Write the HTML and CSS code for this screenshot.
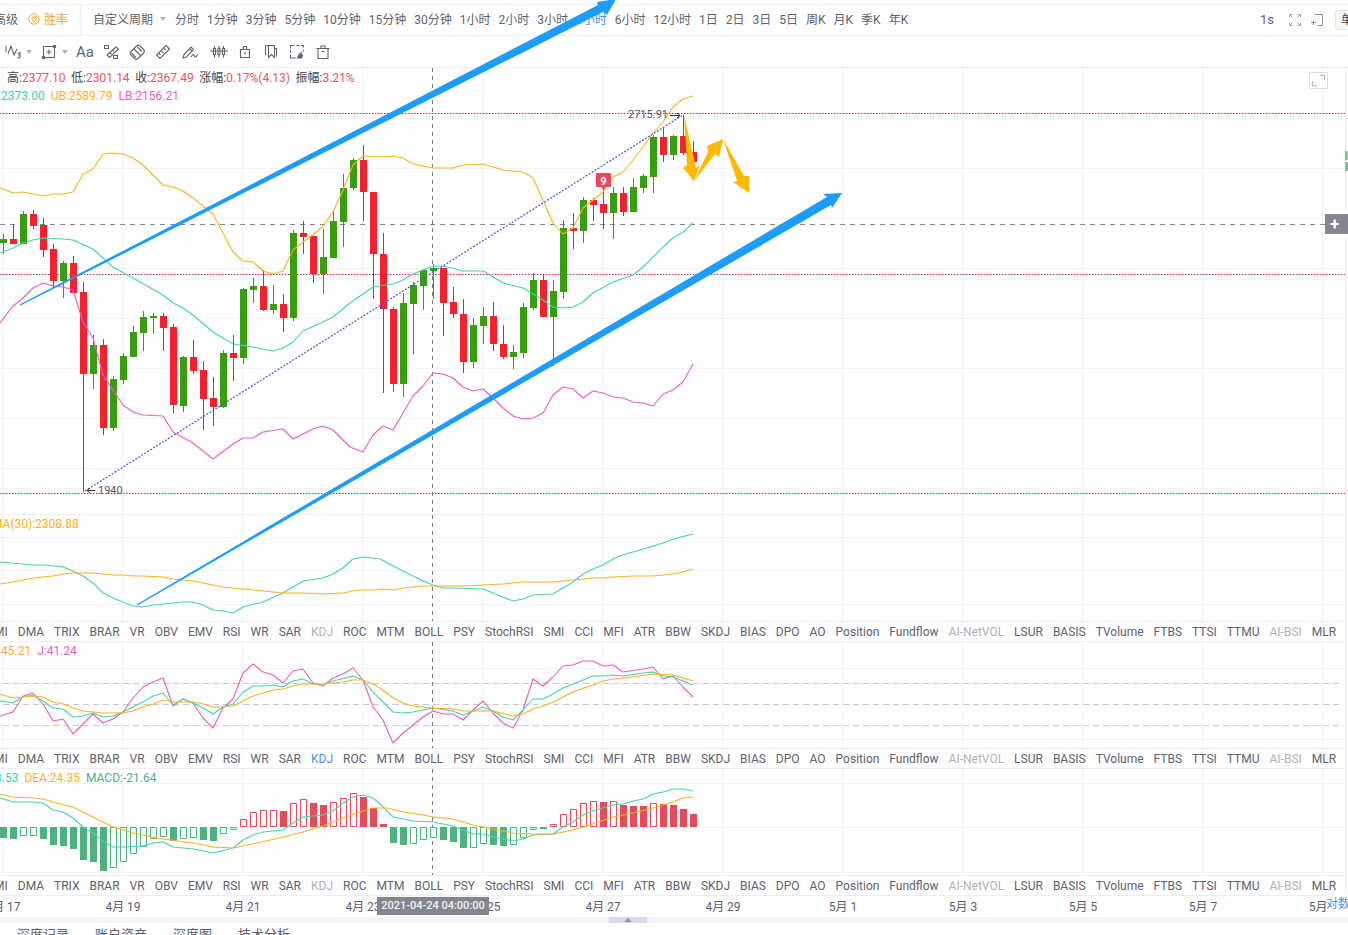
FILE: index.html
```html
<!DOCTYPE html>
<html lang="zh-CN">
<head>
<meta charset="utf-8">
<title>K线图</title>
<link rel="stylesheet" href="styles.css">
</head>
<body>
<div class="app">
  <div class="toprule"></div>

  <div class="periodbar">
    <div class="period-left">
      <span>高级</span>
      <span class="winrate">
        <svg class="ic12" viewBox="0 0 12 12"><circle cx="6" cy="6" r="5.2" fill="none" stroke="#f7a823" stroke-width="1"/><circle cx="6" cy="6" r="2.2" fill="none" stroke="#f7a823" stroke-width="1"/><path d="M6 6l3-3" stroke="#f7a823" fill="none"/></svg>
        胜率
      </span>
    </div>
    <div class="periods">
      <span class="custom">自定义周期<i class="caret"></i></span>
      <span>分时</span><span>1分钟</span><span>3分钟</span><span>5分钟</span><span>10分钟</span><span>15分钟</span><span>30分钟</span>
      <span>1小时</span><span>2小时</span><span>3小时</span><span class="active">4小时</span><span>6小时</span><span>12小时</span>
      <span>1日</span><span>2日</span><span>3日</span><span>5日</span><span>周K</span><span>月K</span><span>季K</span><span>年K</span>
    </div>
    <div class="period-right">
      <span class="secs">1s</span>
      <svg class="ic12" viewBox="0 0 12 12" fill="none" stroke="#a5a9b4"><path d="M0.5 3.5v-3h3M0.5 0.5l3 3M8.5 0.5h3v3M11.5 0.5l-3 3M0.5 8.5v3h3M0.5 11.5l3-3M8.5 11.5h3v-3M11.5 11.5l-3-3"/></svg>
      <svg class="ic12" viewBox="0 0 12 12" fill="none" stroke="#8d919c"><path d="M3.5 0.5h8v11h-5M0 8.5h5M2.5 6v5"/></svg>
      <span class="single">单</span>
    </div>
  </div>

  <div class="drawbar">
    <div class="tool group1">
      <svg class="ic-wide" viewBox="0 0 18 14" fill="none" stroke="#5f6470" stroke-width="1.1"><path d="M2 1v6M4 9l3-8 3 9 3-6"/><path d="M13.5 8h3l-1.5 2c2 0 2 3-1.500 3"/></svg>
      <i class="caret"></i>
    </div>
    <div class="tool group2">
      <svg class="ic-wide" viewBox="0 0 16 14" fill="none" stroke="#5f6470" stroke-width="1.1"><path d="M2.5 1.5h11v11h-11zM8 4.500v5M5.500 7h5"/><circle cx="2.500" cy="12.500" r="1.200" fill="#5f6470"/><circle cx="13.500" cy="1.500" r="1.200" fill="#5f6470"/></svg>
      <i class="caret"></i>
    </div>
    <div class="tool aa">Aa</div>
    <div class="tool"><svg class="ic16" viewBox="0 0 16 16" fill="none" stroke="#5f6470" stroke-width="1.1"><path d="M1.500 1.500h4v3h-4zM10.500 11.500h4v3h-4zM13 3l-9 8 2.500 2.500 9-8.500z"/><path d="M9.500 6l1.500 1.500M7 8.500l1.500 1.500"/></svg></div>
    <div class="tool"><svg class="ic16" viewBox="0 0 16 16" fill="none" stroke="#5f6470" stroke-width="1.1"><path d="M5.500 14.500l-3.500-3.500c-1-1-1-2.500 0-3.500l5.500-5.500c1-1 2.500-1 3.500 0l3.500 3.500c1 1 1 2.500 0 3.500l-5.500 5.500c-1 1-2.500 1-3.500 0z"/><path d="M5 5l6.500 6.500M2.500 9l4.500 4.500M8.500 3l4.500 4.500"/></svg></div>
    <div class="tool"><svg class="ic16" viewBox="0 0 16 16" fill="none" stroke="#5f6470" stroke-width="1.1"><path d="M11 1.500l3.500 3.500-9.500 9.500-3.500-3.500z"/><path d="M4 9.500l1.500 1.500M6.500 7l2 2M9 4.500l1.500 1.500"/></svg></div>
    <div class="tool wide"><svg class="ic-draw" viewBox="0 0 18 14" fill="none" stroke="#5f6470" stroke-width="1.1"><path d="M1 13l1-3.500 7-7.500 2.500 2.500-7 7.500zM7.500 3.500l2.500 2.500"/><path d="M9 12c1.500-3 3-3 3.500-1s2 1 3-1.500"/></svg></div>
    <div class="tool"><svg class="ic-wide" viewBox="0 0 18 14" fill="none" stroke="#5f6470" stroke-width="1.1"><path d="M3.500 3.500h2v6h-2zM8 3.500h2v6h-2zM12.500 3.500h2v6h-2zM4.500 1v2.500M4.500 9.500v3M9 1v2.500M9 9.500v3M13.500 1v2.500M13.500 9.500v3M0 6h18"/></svg></div>
    <div class="tool"><svg class="ic12" viewBox="0 0 12 12" fill="none" stroke="#5f6470" stroke-width="1.1"><path d="M1.500 3.500h9v8h-9zM4.500 3.500v-3h3v3"/><path d="M6 6v2.500"/></svg></div>
    <div class="tool"><svg class="ic14" viewBox="0 0 14 14" fill="none" stroke="#5f6470" stroke-width="1.1"><path d="M1.500 0.500h9v12l-3-3-3 3v-12"/><path d="M1.500 0.500v9.500M10.500 3.500h2v8"/></svg></div>
    <div class="tool"><svg class="ic16" viewBox="0 0 16 16" fill="none" stroke="#5f6470" stroke-width="1.1"><path d="M1.500 4.500v-3h4M7.500 1.500h3M12 1.500h2.500v2M1.500 6v3M1.500 10.500v3.500h5M14.500 5.500v2"/><path d="M8.500 14l2-4 3 1-1 3z" fill="#5f6470"/><path d="M11 10l2-2"/></svg></div>
    <div class="tool"><svg class="ic14" viewBox="0 0 14 14" fill="none" stroke="#5f6470" stroke-width="1.1"><path d="M0.500 3.500h13M5 3.500v-2.500h4v2.500M2 3.500v10h10v-10M5.500 6.500h3"/></svg></div>
  </div>

  <div class="charts">
    <section class="pane pane-main">
      <svg class="plot" viewBox="0 68 1345 446">
        <path class="grid" d="M2.500 68v446M122.500 68v446M242.500 68v446M362.500 68v446M482.500 68v446M602.500 68v446M722.500 68v446M842.500 68v446M962.500 68v446M1082.500 68v446M1202.500 68v446M1322.500 68v446M0 118.500h1345M0 168.500h1345M0 218.500h1345M0 268.500h1345M0 318.500h1345M0 368.500h1345M0 418.500h1345M0 468.500h1345"/>
        <path class="level" d="M0 113.500h1345M0 274.500h1345M0 493.500h1345"/>
        <path class="current" d="M0 224.500h1325"/>
        <path class="cross" d="M432.500 68v446"/>
        <path class="wick-g" d="M3.500 234V254M23.500 211V244M63.500 261V298M93.500 335V389M113.500 376V431M123.500 353V384M133.500 326V357M143.500 311V351M153.500 313V334M183.500 356V412M223.500 350V408M243.500 288V364M253.500 278V303M273.500 285V314M293.500 230V321M323.500 229V294M333.500 210V258M343.500 174V247M353.500 158V190M403.500 293V397M413.500 282V354M423.500 269V310M433.500 264V299M473.500 318V368M483.500 307V344M513.500 345V369M523.500 303V358M533.500 273V310M553.500 280V366M563.500 220V299M583.500 197V243M613.500 187V239M633.500 178V212M643.500 174V193M653.500 135V193M673.500 135V160"/>
        <path class="wick-r" d="M13.500 224V244M33.500 210V229M43.500 218V257M53.500 244V287M73.500 256V293M83.500 282V492M103.500 339V435M163.500 313V351M173.500 324V413M193.500 340V374M203.500 361V430M213.500 377V426M233.500 335V381M263.500 270V311M283.500 294V332M303.500 221V254M313.500 236V283M363.500 145V221M373.500 192V299M383.500 233V393M393.500 307V392M443.500 268V336M453.500 287V318M463.500 299V373M493.500 302V351M503.500 325V359M543.500 274V317M573.500 213V249M593.500 198V221M603.500 187V229M623.500 187V216M663.500 128V162M683.500 115V155M693.500 141V167"/>
        <path class="body-g" d="M0 239h7v4h-7zM20 214h7v30h-7zM60 263h7v18h-7zM90 345h7v29h-7zM110 379h7v49h-7zM120 356h7v24h-7zM130 332h7v25h-7zM140 317h7v16h-7zM150 316h7v2h-7zM180 357h7v49h-7zM220 353h7v54h-7zM240 289h7v69h-7zM250 286h7v4h-7zM270 304h7v6h-7zM290 233h7v85h-7zM320 257h7v17h-7zM330 221h7v37h-7zM340 188h7v34h-7zM350 160h7v28h-7zM400 303h7v81h-7zM410 285h7v19h-7zM420 270h7v16h-7zM430 268h7v3h-7zM470 325h7v37h-7zM480 316h7v10h-7zM510 352h7v5h-7zM520 307h7v46h-7zM530 280h7v28h-7zM550 291h7v26h-7zM560 228h7v64h-7zM580 200h7v31h-7zM610 193h7v20h-7zM630 187h7v25h-7zM640 176h7v12h-7zM650 137h7v40h-7zM670 136h7v19h-7z"/>
        <path class="body-r" d="M10 239h7v5h-7zM30 214h7v12h-7zM40 225h7v25h-7zM50 249h7v32h-7zM70 263h7v30h-7zM80 292h7v82h-7zM100 345h7v83h-7zM160 316h7v12h-7zM170 327h7v78h-7zM190 357h7v14h-7zM200 370h7v29h-7zM210 398h7v9h-7zM230 353h7v5h-7zM260 286h7v24h-7zM280 304h7v14h-7zM300 233h7v4h-7zM310 236h7v38h-7zM360 160h7v32h-7zM370 192h7v62h-7zM380 254h7v55h-7zM390 309h7v75h-7zM440 268h7v35h-7zM450 302h7v12h-7zM460 314h7v48h-7zM490 316h7v28h-7zM500 344h7v13h-7zM540 280h7v37h-7zM570 228h7v3h-7zM590 200h7v5h-7zM600 204h7v9h-7zM620 193h7v19h-7zM660 137h7v18h-7zM680 136h7v17h-7zM690 152h7v10h-7z"/>
        <polyline class="ln-o" points="0,188 13,193 23,192 33,194 43,196 53,194 63,194 73,192 83,174 93,169 103,154 113,153 123,154 133,158 143,165 153,175 163,185 173,187 183,191 193,198 203,206 213,214 223,233 233,252 243,261 253,262 263,271 273,274 283,271 293,250 303,242 313,235 323,226 333,212 343,190 353,165 363,156 383,157 393,156 403,158 413,164 433,168 453,168 463,165 483,164 503,170 523,172 533,178 543,200 553,223 563,234 573,228 583,208 593,200 603,192 613,177 623,172 633,160 643,147 653,133 663,122 673,107 683,99 693,96"/>
        <polyline class="ln-t" points="0,253 13,248 23,243 33,240 43,238 63,239 73,240 93,249 113,267 133,278 163,295 173,303 183,308 193,315 213,332 233,344 253,347 273,351 283,348 293,342 303,331 323,322 333,317 350,303 373,287 393,284 403,280 413,274 423,270 433,266 443,266 463,271 483,271 503,283 523,288 543,300 553,307 563,308 573,307 583,302 593,293 613,282 633,275 643,267 653,257 663,247 673,238 683,232 693,223"/>
        <polyline class="ln-p" points="0,323 13,306 23,298 33,288 43,283 53,286 63,287 73,290 83,322 93,338 103,375 113,390 123,405 133,412 143,415 163,416 173,432 193,443 213,459 233,444 243,438 253,438 263,432 283,429 293,439 303,434 313,429 323,426 333,430 350,447 363,452 373,435 383,426 393,430 403,413 413,396 423,386 433,373 443,374 453,378 463,387 473,391 483,389 493,398 503,408 513,416 523,419 533,418 543,413 553,395 563,387 573,389 583,398 593,391 603,393 613,397 623,398 633,402 643,403 653,406 663,394 673,390 683,382 693,364"/>
        <path class="trend" d="M85 491L683 115"/>
        <path class="tick" d="M670 115.500h10M677 113l3 2.500-3 2.500M87 490.500h8M90 488l-3 2.500 3 2.500"/>
        <text class="price" x="628" y="118">2715.91</text>
        <text class="price" x="98" y="494">1940</text>
        <path class="badge" d="M598 173h12a1 1 0 0 1 1 1v12a1 1 0 0 1-1 1h-4l-2.500 3-2.500-3h-4a1 1 0 0 1-1-1v-12a1 1 0 0 1 1-1z"/>
        <text class="badge-t" x="603.500" y="185">9</text>
      </svg>
      <div class="legend legend-main">
        <div class="legend-row first">
          <span>高:<b class="up">2377.10</b></span><span>低:<b class="up">2301.14</b></span><span>收:<b class="up">2367.49</b></span><span>涨幅:<b class="up">0.17%(4.13)</b></span><span>振幅:<b class="up">3.21%</b></span>
        </div>
        <div class="legend-row second">
          <span class="c-t">2373.00</span><span class="c-o">UB:2589.79</span><span class="c-p">LB:2156.21</span>
        </div>
      </div>
      <div class="expand"><svg viewBox="0 0 19 17" fill="none" stroke="#9ca2ad"><path d="M11 2.500h5.500v5M2.500 9.500v5h5"/></svg></div>
      <div class="plus-tag">+</div>
      <div class="axis-mark m1"></div>
      <div class="axis-mark m2"></div>
    </section>

    <section class="pane pane-sub">
      <svg class="plot" viewBox="0 515 1345 106">
        <path class="grid" d="M2.500 515v106M122.500 515v106M242.500 515v106M362.500 515v106M482.500 515v106M602.500 515v106M722.500 515v106M842.500 515v106M962.500 515v106M1082.500 515v106M1202.500 515v106M1322.500 515v106M0 537.500h1345M0 570.500h1345M0 604.500h1345"/>
        <path class="cross" d="M432.500 515v106"/>
        <polyline class="ln-t" points="0,562 33,565 43,565 63,567 73,571 83,576 93,583 103,593 113,598 123,602 133,606 143,607 153,605 173,603 183,602 193,602 203,605 213,610 223,611 233,613 243,607 263,602 283,593 303,581 323,578 333,574 343,568 353,559 363,557 380,559 393,566 403,571 423,581 433,585 443,588 453,588 483,589 493,593 513,601 523,599 533,595 553,594 563,588 573,582 583,574 593,569 603,565 613,559 623,555 643,549 663,543 673,539 693,534"/>
        <polyline class="ln-o" points="0,584 13,582 33,578 53,576 63,574 73,573 93,573 113,575 123,575 133,576 143,576 163,577 173,579 193,581 213,585 223,587 243,589 263,591 283,593 303,593 323,594 343,593 353,591 363,590 373,590 383,589 393,590 403,588 423,586 433,586 453,586 463,586 483,585 503,584 523,582 553,582 573,580 593,578 603,578 613,577 633,576 653,576 673,574 683,572 693,569"/>
      </svg>
      <div class="legend"><div class="legend-row flush"><span class="c-o clip-ma">MA(30):2308.88</span></div></div>
    </section>
    <nav class="indicators">
      <span class="first-ind">MI</span><span>DMA</span><span>TRIX</span><span>BRAR</span><span>VR</span><span>OBV</span><span>EMV</span><span>RSI</span><span>WR</span><span>SAR</span><span class="muted">KDJ</span><span>ROC</span><span>MTM</span><span>BOLL</span><span>PSY</span><span>StochRSI</span><span>SMI</span><span>CCI</span><span>MFI</span><span>ATR</span><span>BBW</span><span>SKDJ</span><span>BIAS</span><span>DPO</span><span>AO</span><span>Position</span><span>Fundflow</span><span class="muted">AI-NetVOL</span><span>LSUR</span><span>BASIS</span><span>TVolume</span><span>FTBS</span><span>TTSI</span><span>TTMU</span><span class="muted">AI-BSI</span><span>MLR</span>
    </nav>

    <section class="pane pane-sub">
      <svg class="plot" viewBox="0 642 1345 106">
        <path class="grid" d="M2.500 642v106M122.500 642v106M242.500 642v106M362.500 642v106M482.500 642v106M602.500 642v106M722.500 642v106M842.500 642v106M962.500 642v106M1082.500 642v106M1202.500 642v106M1322.500 642v106M0 668.500h1345M0 739.500h1345"/>
        <path class="kdj-level" d="M3 683.500h1340M3 704.500h1340M3 725.500h1340"/>
        <path class="cross" d="M432.500 642v106"/>
        <polyline class="ln-p" points="0,716 13,712 23,696 33,693 43,704 53,721 63,719 73,734 83,724 93,714 103,723 113,719 123,712 133,698 143,687 153,682 163,678 173,706 183,699 193,703 203,718 213,728 223,708 233,699 243,673 253,664 263,672 273,675 283,683 293,671 303,669 313,683 323,686 333,678 343,674 353,668 363,680 373,707 383,720 393,743 403,733 413,725 423,717 433,711 443,714 453,714 463,720 473,710 483,701 493,713 503,723 513,728 523,710 533,679 543,686 553,677 563,666 573,665 583,661 593,661 603,666 613,665 623,672 643,669 653,667 663,679 673,676 683,687 693,697"/>
        <polyline class="ln-t" points="0,701 13,703 23,697 33,695 43,701 53,708 63,709 73,717 83,716 93,713 103,717 113,716 123,712 133,707 143,702 153,696 163,693 173,705 183,699 193,703 203,708 213,714 223,707 233,704 243,692 253,686 263,686 273,685 283,687 293,681 303,679 313,684 323,685 333,681 353,676 363,680 373,692 383,702 393,712 403,713 413,712 433,708 453,711 463,715 483,707 493,711 503,717 513,720 523,710 533,699 543,699 553,694 563,688 593,676 603,676 613,675 623,676 643,673 653,672 663,676 673,677 693,685"/>
        <polyline class="ln-o" points="0,694 13,698 23,697 33,696 43,697 53,702 63,704 73,708 83,711 93,712 103,713 123,713 133,711 143,707 153,704 163,700 173,702 193,702 203,704 213,707 223,707 233,706 243,701 253,696 263,693 273,690 283,689 293,686 303,684 323,684 343,682 353,680 363,680 373,684 380,688 393,698 403,703 413,706 423,707 433,708 453,709 463,711 493,711 513,716 523,714 533,709 543,706 553,702 573,692 593,685 603,681 613,679 633,677 653,674 673,675 683,678 693,681"/>
      </svg>
      <div class="legend"><div class="legend-row flush"><span class="c-o">45.21</span><span class="c-p">J:41.24</span></div></div>
    </section>
    <nav class="indicators">
      <span class="first-ind">MI</span><span>DMA</span><span>TRIX</span><span>BRAR</span><span>VR</span><span>OBV</span><span>EMV</span><span>RSI</span><span>WR</span><span>SAR</span><span class="on">KDJ</span><span>ROC</span><span>MTM</span><span>BOLL</span><span>PSY</span><span>StochRSI</span><span>SMI</span><span>CCI</span><span>MFI</span><span>ATR</span><span>BBW</span><span>SKDJ</span><span>BIAS</span><span>DPO</span><span>AO</span><span>Position</span><span>Fundflow</span><span class="muted">AI-NetVOL</span><span>LSUR</span><span>BASIS</span><span>TVolume</span><span>FTBS</span><span>TTSI</span><span>TTMU</span><span class="muted">AI-BSI</span><span>MLR</span>
    </nav>

    <section class="pane pane-sub">
      <svg class="plot" viewBox="0 769 1345 106">
        <path class="grid" d="M2.500 769v106M122.500 769v106M242.500 769v106M362.500 769v106M482.500 769v106M602.500 769v106M722.500 769v106M842.500 769v106M962.500 769v106M1082.500 769v106M1202.500 769v106M1322.500 769v106M0 783.500h1345M0 827.500h1345M0 872.500h1345"/>
        <path class="cross" d="M432.500 769v106"/>
        <path class="bar-g" d="M0 827h7v11h-7zM10 827h7v12h-7zM40 827h7v12h-7zM50 827h7v18h-7zM60 827h7v19h-7zM70 827h7v22h-7zM80 827h7v33h-7zM90 827h7v35h-7zM100 827h7v44h-7zM170 827h7v14h-7zM200 827h7v13h-7zM210 827h7v14h-7zM390 827h7v16h-7zM400 827h7v18h-7zM440 827h7v13h-7zM450 827h7v15h-7zM460 827h7v21h-7zM490 827h7v18h-7zM500 827h7v19h-7zM540 827h7v2h-7z"/>
        <path class="hol-g" d="M20.500 827.500h6v8h-6zM30.500 827.500h6v8h-6zM110.500 827.500h6v40h-6zM120.500 827.500h6v34h-6zM130.500 827.500h6v26h-6zM140.500 827.500h6v19h-6zM150.500 827.500h6v11h-6zM160.500 827.500h6v9h-6zM180.500 827.500h6v11h-6zM190.500 827.500h6v10h-6zM220.500 827.500h6v6h-6zM230.500 827.500h6v2h-6zM410.500 827.500h6v16h-6zM420.500 827.500h6v12h-6zM430.500 827.500h6v10h-6zM470.500 827.500h6v20h-6zM480.500 827.500h6v16h-6zM510.500 827.500h6v17h-6zM520.500 827.500h6v10h-6zM530.500 827.500h6v2h-6z"/>
        <path class="bar-r" d="M280 811h7v16h-7zM310 803h7v24h-7zM320 805h7v22h-7zM360 797h7v30h-7zM370 808h7v19h-7zM380 824h7v3h-7zM600 802h7v25h-7zM620 805h7v22h-7zM630 806h7v21h-7zM640 806h7v21h-7zM660 804h7v23h-7zM670 805h7v22h-7zM680 809h7v18h-7zM690 814h7v13h-7z"/>
        <path class="hol-r" d="M240.500 819.500h6v7h-6zM250.500 812.500h6v14h-6zM260.500 810.500h6v16h-6zM270.500 810.500h6v16h-6zM290.500 803.500h6v23h-6zM300.500 799.500h6v27h-6zM330.500 802.500h6v24h-6zM340.500 798.500h6v28h-6zM350.500 793.500h6v33h-6zM550.500 824.500h6v2h-6zM560.500 814.500h6v12h-6zM570.500 809.500h6v17h-6zM580.500 803.500h6v23h-6zM590.500 801.500h6v25h-6zM610.500 801.500h6v25h-6zM650.500 803.500h6v23h-6z"/>
        <polyline class="ln-t" points="0,798 13,802 33,802 43,803 53,810 63,812 73,818 83,827 93,833 103,841 113,847 123,847 143,846 153,843 163,842 173,847 193,849 213,853 233,848 243,840 253,835 263,832 283,830 293,823 303,817 323,815 333,811 343,803 353,797 363,795 373,798 380,804 393,817 413,821 433,822 443,824 453,826 473,834 483,834 493,837 513,841 523,839 533,835 553,834 563,827 573,822 583,815 593,811 613,805 623,804 633,801 643,799 653,794 663,792 673,789 683,789 693,791"/>
        <polyline class="ln-o" points="0,794 13,797 33,798 43,799 53,802 73,807 83,812 103,822 113,827 123,830 133,833 163,839 193,843 213,847 233,848 253,844 283,837 303,832 323,826 343,818 363,811 373,808 387,808 403,812 423,815 433,817 453,819 473,825 493,829 513,833 533,834 553,834 573,830 593,824 613,817 633,813 653,808 673,802 683,798 693,797"/>
      </svg>
      <div class="legend"><div class="legend-row flush"><span class="c-t clip-dif">3.53</span><span class="c-o">DEA:24.35</span><span class="c-g">MACD:-21.64</span></div></div>
    </section>
    <nav class="indicators">
      <span class="first-ind">MI</span><span>DMA</span><span>TRIX</span><span>BRAR</span><span>VR</span><span>OBV</span><span>EMV</span><span>RSI</span><span>WR</span><span>SAR</span><span class="muted">KDJ</span><span>ROC</span><span>MTM</span><span>BOLL</span><span>PSY</span><span>StochRSI</span><span>SMI</span><span>CCI</span><span>MFI</span><span>ATR</span><span>BBW</span><span>SKDJ</span><span>BIAS</span><span>DPO</span><span>AO</span><span>Position</span><span>Fundflow</span><span class="muted">AI-NetVOL</span><span>LSUR</span><span>BASIS</span><span>TVolume</span><span>FTBS</span><span>TTSI</span><span>TTMU</span><span class="muted">AI-BSI</span><span>MLR</span>
    </nav>
  </div>

  <div class="dates">
    <span>4月 17</span><span>4月 19</span><span>4月 21</span><span>4月 23</span><span>4月 25</span><span>4月 27</span><span>4月 29</span><span>5月 1</span><span>5月 3</span><span>5月 5</span><span>5月 7</span><span>5月 9</span>
    <div class="date-tip">2021-04-24 04:00:00</div>
    <div class="log">对数</div>
  </div>

  <div class="band"><div class="handle"><i></i></div></div>

  <div class="bottomtabs">
    <span>深度记录</span><span>账户资产</span><span>深度图</span><span>技术分析</span>
  </div>

  <svg class="drawings" viewBox="0 0 1348 935">
    <polygon class="blue" points="19.600,304.400 598,5 597,2 616,-1 607,15 603,12 20.400,305.600"/>
    <polygon class="blue" points="136.600,604.400 827,197 823,194 842,193 832,208 831,205 137.400,605.600"/>
    <polygon class="amber" points="684,115 696,168 700,164 694,181 683,168 687,165"/>
    <polygon class="amber" points="694,181 708,152 707,146 723,139 719,157 715,154"/>
    <polygon class="amber" points="723,139 744,176 749,176 749,193 733,182 737,181"/>
  </svg>
</div>
</body>
</html>
```

FILE: styles.css
```css
* { box-sizing: border-box; }
html, body { margin: 0; padding: 0; background: #fff; }
body {
  font-family: Roboto, "Noto Sans CJK SC", sans-serif;
  font-size: 12px;
  color: #5d626e;
  overflow: hidden;
}
.app { position: relative; width: 1348px; height: 935px; overflow: hidden; }

.toprule { height: 5px; border-bottom: 1px solid #eef0f4; }

.periodbar {
  display: flex;
  align-items: center;
  height: 31px;
  border-bottom: 1px solid #eef0f4;
  white-space: nowrap;
}
.period-left {
  display: flex;
  align-items: center;
  gap: 10px;
  flex: none;
  width: 87px;
  height: 30px;
  padding-bottom: 3px;
  margin-left: -6px;
  border-right: 1px solid #eef0f4;
}
.winrate { display: flex; align-items: center; gap: 4px; color: #f7a823; }
.periods { display: flex; align-items: center; gap: 8px; margin: -3px 0 0 12px; }
.custom { display: flex; align-items: center; gap: 7px; margin-right: 1px; }
.active { color: #4a90f0; }
.caret {
  display: inline-block;
  width: 0;
  height: 0;
  border-left: 3.500px solid transparent;
  border-right: 3.500px solid transparent;
  border-top: 4px solid #b0b3bb;
}
.period-right { display: flex; align-items: center; gap: 10px; margin-left: auto; margin-right: -13px; flex: none; }
.secs { font-size: 13px; margin-right: 5px; margin-top: -1px; }
.single {
  display: block;
  width: 26px;
  height: 20px;
  margin-left: 2px;
  padding-left: 5px;
  line-height: 18px;
  background: #f5f6f9;
  border: 1px solid #e3e5ea;
  border-radius: 2px;
  color: #444;
}
.ic12 { display: block; width: 12px; height: 12px; flex: none; }
.ic14 { display: block; width: 14px; height: 14px; flex: none; }
.ic16 { display: block; width: 16px; height: 16px; flex: none; }
.ic-wide { display: block; width: 18px; height: 14px; flex: none; }
.ic-draw { display: block; width: 18px; height: 14px; flex: none; }

.drawbar {
  display: flex;
  align-items: center;
  height: 32px;
  border-bottom: 1px solid #eef0f4;
}
.tool { display: flex; align-items: center; justify-content: center; flex: none; width: 26px; height: 31px; }
.tool.wide { width: 30px; }
.tool.group1, .tool.group2 { width: 36px; justify-content: flex-start; padding-left: 4px; gap: 4px; }
.tool.aa { font-size: 15px; color: #5f6470; }

.charts { width: 1346px; border-right: 1px solid #eceef2; }
.pane { position: relative; border-bottom: 1px solid #eceef1; }
.pane-main { height: 447px; }
.pane-sub { height: 107px; }
.plot { display: block; width: 1345px; height: 100%; overflow: hidden; }
.pane-main .plot { height: 446px; }
.pane-sub .plot { height: 106px; }

.grid { stroke: #f2f4f8; stroke-width: 1; fill: none; }
.level { stroke: #c92a3b; stroke-width: 1; stroke-dasharray: 1.500 1.500; fill: none; }
.current { stroke: #7a8897; stroke-width: 1; stroke-dasharray: 5 5; fill: none; }
.cross { stroke: #6d7e8f; stroke-width: 1; stroke-dasharray: 4 4; fill: none; }
.kdj-level { stroke: #c9c9c9; stroke-width: 1; stroke-dasharray: 6 4; fill: none; }
.wick-g { stroke: #3a9d10; stroke-width: 1; fill: none; }
.wick-r { stroke: #e32236; stroke-width: 1; fill: none; }
.body-g { fill: #379e0f; }
.body-r { fill: #f5212f; }
.ln-o, .ln-t, .ln-p { fill: none; stroke-width: 1.100; stroke-linejoin: round; }
.ln-o { stroke: #fdb022; }
.ln-t { stroke: #45d4b0; }
.ln-p { stroke: #ef5bc5; }
.trend { stroke: #4259dc; stroke-width: 1.200; stroke-dasharray: 2 1.500; fill: none; }
.tick { stroke: #333; stroke-width: 1; fill: none; }
.price { font-family: Roboto, sans-serif; font-size: 11px; fill: #555a65; }
.badge { fill: #e44a5c; }
.badge-t { font-family: Roboto, sans-serif; font-size: 11px; font-weight: 700; fill: #fff; text-anchor: middle; }
.bar-g { fill: #4db27e; }
.bar-r { fill: #e64a5b; }
.hol-g { fill: #fff; stroke: #4db27e; stroke-width: 1; }
.hol-r { fill: #fff; stroke: #e64a5b; stroke-width: 1; }

.legend { position: absolute; top: 0; left: 0; line-height: 18px; white-space: nowrap; }
.legend-main { top: 1px; }
.legend-row { display: flex; gap: 6px; }
.legend-row.first { padding-left: 7px; gap: 5.500px; color: #444; }
.legend-row.second { padding-left: 1px; }
.legend-row.flush { padding-left: 1px; }
.legend-row b { font-weight: 400; }
.up { color: #e55765; }
.c-t { color: #41d1ad; }
.c-o { color: #fdb022; }
.c-p { color: #ef5bc5; }
.c-g { color: #4db27e; }
.clip-ma { margin-left: -9px; }
.clip-dif { margin-left: -6px; }

.expand {
  position: absolute;
  top: 4px;
  left: 1309px;
  width: 19px;
  height: 17px;
  border: 1px solid #dcdfe4;
}
.expand svg { display: block; width: 17px; height: 15px; }
.plus-tag {
  position: absolute;
  top: 146px;
  left: 1325px;
  width: 23px;
  height: 20px;
  background: #83868f;
  color: #fff;
  font-size: 17px;
  font-weight: 700;
  line-height: 20px;
  padding-left: 5px;
}
.axis-mark { position: absolute; left: 1345px; width: 3px; height: 9px; background: #7cc4a2; }
.axis-mark.m1 { top: 83px; }
.axis-mark.m2 { top: 94px; }

.indicators {
  display: flex;
  align-items: center;
  gap: 10px;
  height: 20px;
  border-bottom: 1px solid #eceef1;
  overflow: hidden;
  white-space: nowrap;
}
.first-ind { margin-left: -6px; }
.muted { color: #aeb2ba; }
.on { color: #4a90f0; }

.dates {
  position: relative;
  display: flex;
  height: 21px;
  padding-bottom: 3px;
  margin-left: -57px;
  width: 1440px;
  align-items: center;
  white-space: nowrap;
}
.dates > span { flex: none; width: 120px; text-align: center; }
.date-tip {
  position: absolute;
  top: 1px;
  left: 434px;
  width: 112px;
  height: 18px;
  line-height: 18px;
  text-align: center;
  background: #83868f;
  color: #f2f2f2;
  font-size: 11px;
  font-weight: 500;
}
.log { position: absolute; top: -2px; left: 1383px; line-height: 21px; color: #4a90f0; background: #fff; }

.band { height: 6px; background: #f3f4f8; }
.handle {
  display: flex;
  align-items: center;
  justify-content: center;
  width: 38px;
  height: 6px;
  margin-left: 609px;
  background: #d9dde3;
}
.handle i {
  display: block;
  width: 0;
  height: 0;
  border-left: 4px solid transparent;
  border-right: 4px solid transparent;
  border-bottom: 4px solid #8f949e;
}

.bottomtabs {
  display: flex;
  gap: 26px;
  padding: 3px 0 0 17px;
  font-size: 13px;
  line-height: 18px;
  color: #5a5f6b;
}

.drawings { position: absolute; top: 0; left: 0; width: 1348px; height: 935px; pointer-events: none; }
.blue { fill: #1c9cfd; }
.amber { fill: #ffb900; }
```
